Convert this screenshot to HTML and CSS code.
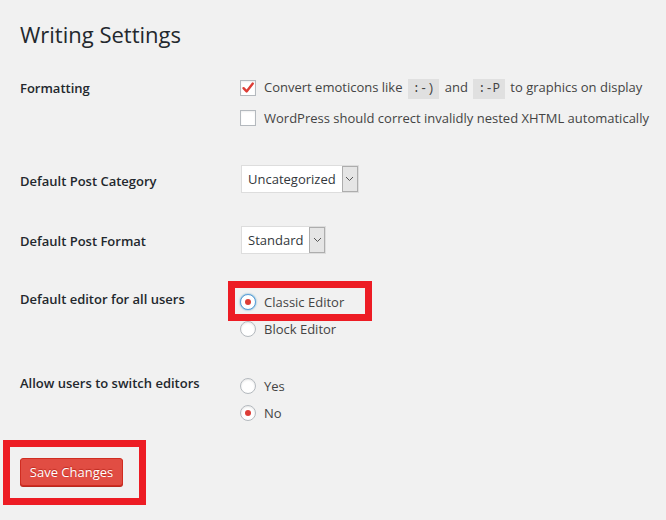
FILE: index.html
```html
<!DOCTYPE html>
<html>
<head>
<meta charset="utf-8">
<link rel="stylesheet" href="styles.css">
</head>
<body>
<div class="wrap">
  <h1 class="title">Writing Settings</h1>
  <div class="form">
    <div class="row row-format">
      <div class="th">Formatting</div>
      <div class="td">
        <div class="check-line">
          <span class="checkbox checked"><svg width="14" height="14" viewBox="0 0 14 14"><path d="M2.5 7.2 L5.6 10.4 L11.8 2.6" fill="none" stroke="#dd3d36" stroke-width="2.4" stroke-linecap="round" stroke-linejoin="round"/></svg></span>
          <span class="label-text">Convert emoticons like <code>:-)</code> and <code>:-P</code> to graphics on display</span>
        </div>
        <div class="check-line">
          <span class="checkbox"></span>
          <span class="label-text">WordPress should correct invalidly nested XHTML automatically</span>
        </div>
      </div>
    </div>
    <div class="row row-cat">
      <div class="th">Default Post Category</div>
      <div class="td">
        <div class="select"><span class="select-value">Uncategorized</span><span class="select-arrow"><svg width="9" height="6" viewBox="0 0 9 6"><path d="M1 1 L4.5 4.5 L8 1" fill="none" stroke="#555" stroke-width="1"/></svg></span></div>
      </div>
    </div>
    <div class="row row-fmt">
      <div class="th">Default Post Format</div>
      <div class="td">
        <div class="select"><span class="select-value">Standard</span><span class="select-arrow"><svg width="9" height="6" viewBox="0 0 9 6"><path d="M1 1 L4.5 4.5 L8 1" fill="none" stroke="#555" stroke-width="1"/></svg></span></div>
      </div>
    </div>
    <div class="row row-editor">
      <div class="th">Default editor for all users</div>
      <div class="td">
        <div class="radio-line highlighted">
          <span class="radio checked focused"></span>
          <span class="label-text">Classic Editor</span>
        </div>
        <div class="radio-line">
          <span class="radio"></span>
          <span class="label-text">Block Editor</span>
        </div>
      </div>
    </div>
    <div class="row row-switch">
      <div class="th">Allow users to switch editors</div>
      <div class="td">
        <div class="radio-line">
          <span class="radio"></span>
          <span class="label-text">Yes</span>
        </div>
        <div class="radio-line">
          <span class="radio checked"></span>
          <span class="label-text">No</span>
        </div>
      </div>
    </div>
  </div>
  <div class="submit">
    <button class="button-primary">Save Changes</button>
  </div>
</div>
</body>
</html>
```

FILE: styles.css
```css
html, body {
  margin: 0;
  padding: 0;
  background: #f1f1f1;
}
body {
  font-family: "Open Sans", "Noto Sans", sans-serif;
  font-size: 13px;
  color: #444;
  width: 666px;
  height: 520px;
  overflow: hidden;
}
.wrap {
  padding-left: 20px;
  padding-top: 19px;
}
.title {
  margin: 0;
  font-size: 22px;
  font-weight: 400;
  line-height: 30px;
  color: #23282d;
}
.form {
  margin-top: 24px;
}
.row {
  display: grid;
  grid-template-columns: 220px 1fr;
  align-items: start;
}
.th {
  font-weight: 600;
  color: #23282d;
  line-height: 20px;
}
.td {
  display: flex;
  flex-direction: column;
}
.label-text {
  line-height: 20px;
}
/* row spacing */
.row-format .th { padding-top: 5px; }
.row-format { height: 60px; }
.row-cat .th { padding-top: 38px; }
.row-cat .td { padding-top: 32px; }
.row-cat { height: 77px; }
.row-fmt .th { padding-top: 21px; }
.row-fmt .td { padding-top: 16px; }
.row-fmt { height: 60px; }
.row-editor .th { padding-top: 19px; }
.row-editor .td { padding-top: 18px; }
.row-editor { height: 85px; }
.row-switch .th { padding-top: 18px; }
.row-switch .td { padding-top: 17px; }

.check-line {
  display: flex;
  align-items: center;
  gap: 8px;
  height: 30px;
}
.checkbox {
  width: 16px;
  height: 16px;
  box-sizing: border-box;
  border: 1px solid #b4b9be;
  background: #fff;
  box-shadow: inset 0 1px 2px rgba(0,0,0,0.07);
  display: flex;
  align-items: center;
  justify-content: center;
  flex: none;
}
code {
  font-family: "Liberation Mono", "DejaVu Sans Mono", monospace;
  font-size: 12px;
  background: rgba(0,0,0,0.07);
  padding: 3px 5px 3px;
  margin: 0 2px;
}

.select {
  display: inline-flex;
  align-self: flex-start;
  align-items: stretch;
  height: 28px;
  box-sizing: border-box;
  border: 1px solid #ddd;
  background: #fff;
  margin-left: 1px;
}
.select-value {
  padding: 0 6px 0 6px;
  line-height: 26px;
  color: #32373c;
}
.select-arrow {
  width: 16px;
  box-sizing: border-box;
  border: 1px solid #adadad;
  background: #e5e5e5;
  display: flex;
  align-items: center;
  justify-content: center;
}

.radio-line {
  display: flex;
  align-items: center;
  gap: 8px;
  height: 27px;
  position: relative;
}
.radio {
  width: 16px;
  height: 16px;
  box-sizing: border-box;
  border: 1px solid #b4b9be;
  border-radius: 50%;
  background: #fff;
  box-shadow: inset 0 1px 2px rgba(0,0,0,0.1);
  display: flex;
  align-items: center;
  justify-content: center;
  flex: none;
}
.radio.checked::before {
  content: "";
  width: 6px;
  height: 6px;
  border-radius: 50%;
  background: #dd3d36;
}
.radio.focused {
  border-color: #5b9dd9;
  box-shadow: 0 0 2px rgba(30,140,190,0.8);
}
.highlighted::after {
  content: "";
  position: absolute;
  left: -12px;
  top: -7px;
  width: 144px;
  height: 40px;
  box-sizing: border-box;
  border: 7px solid #ed1c24;
}

.submit {
  margin-top: 32px;
  position: relative;
  display: inline-block;
}
.submit::after {
  content: "";
  position: absolute;
  left: -17px;
  top: -18px;
  width: 143px;
  height: 65px;
  box-sizing: border-box;
  border: 7px solid #ed1c24;
}
.button-primary {
  display: block;
  height: 28px;
  width: 103px;
  padding: 0;
  font-family: "Open Sans", "Noto Sans", sans-serif;
  font-size: 13px;
  line-height: 26px;
  color: #fff;
  background: #e14d43;
  border: 1px solid #d02c21;
  border-radius: 3px;
  box-shadow: 0 1px 0 #ba281e;
  text-shadow: 0 -1px 1px #ba281e;
}
```
